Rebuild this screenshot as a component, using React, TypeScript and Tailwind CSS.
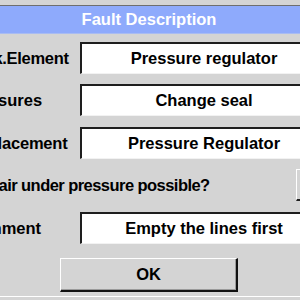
import React from "react";

const font = { fontFamily: '"Liberation Sans", Arial, sans-serif' };

function Field({ label, value, labelClass }: { label: string; value: string; labelClass: string }) {
  return (
    <div className="flex h-[32px] items-center">
      <div className="flex w-[80px] shrink-0 justify-start overflow-visible">
        <span className={`whitespace-nowrap text-[16.5px] font-bold text-black ${labelClass}`}>{label}</span>
      </div>
      <div className="flex h-full w-[247px] shrink-0 items-center justify-center border-l-2 border-t-2 border-b border-r border-l-[#1e1e1e] border-t-[#1e1e1e] border-b-[#f2f2f2] border-r-[#f2f2f2] bg-white">
        <span className="whitespace-nowrap text-[16.5px] font-bold text-black">{value}</span>
      </div>
    </div>
  );
}

export default function App() {
  return (
    <div className="relative h-[300px] w-[300px] overflow-hidden bg-[#d4d4d4]" style={font}>
      <div className="h-[5px] bg-[#d4d4d4]" />
      <div className="h-px bg-[#6e6e6e]" />
      <div className="flex h-[27px] items-center justify-center bg-[#8eaafc]">
        <span className="text-[16.5px] font-bold text-white -translate-x-[1px]">Fault Description</span>
      </div>
      <div className="h-px bg-[#a9bcf2]" />
      <div className="flex flex-col pt-[8px]">
        <div className="h-[33px]">
          <Field label="Mark.Element" value="Pressure regulator" labelClass="-ml-[35px] tracking-[-0.3px]" />
        </div>
        <div className="mt-[9px]">
          <Field label="Measures" value="Change seal" labelClass="-ml-[34px]" />
        </div>
        <div className="mt-[11px]">
          <Field label="Replacement" value="Pressure Regulator" labelClass="-ml-[33px] tracking-[-0.2px]" />
        </div>
        <div className="mt-[10px] flex h-[32px] items-center">
          <span className="w-[296px] shrink-0 whitespace-nowrap text-[16.5px] font-bold tracking-[-0.55px] text-black -ml-[31px]">
            Repair under pressure possible?
          </span>
          <div className="ml-[31px] h-full w-[30px] shrink-0 border-l border-t border-b-2 border-l-white border-t-white border-b-[#1e1e1e] bg-[#d4d4d4]" />
        </div>
        <div className="mt-[11px]">
          <Field label="Comment" value="Empty the lines first" labelClass="-ml-[35px]" />
        </div>
        <div className="mt-[14px] flex">
          <div className="ml-[60px] flex h-[34px] w-[178px] items-center justify-center border-l border-t border-b-2 border-r-2 border-l-white border-t-white border-b-[#111] border-r-[#111] bg-[#d4d4d4] shadow-[inset_-1px_-1px_0_#9a9a9a]">
            <span className="text-[16.5px] font-bold text-black">OK</span>
          </div>
        </div>
        <div className="mt-[4px] h-px bg-white" />
      </div>
    </div>
  );
}
